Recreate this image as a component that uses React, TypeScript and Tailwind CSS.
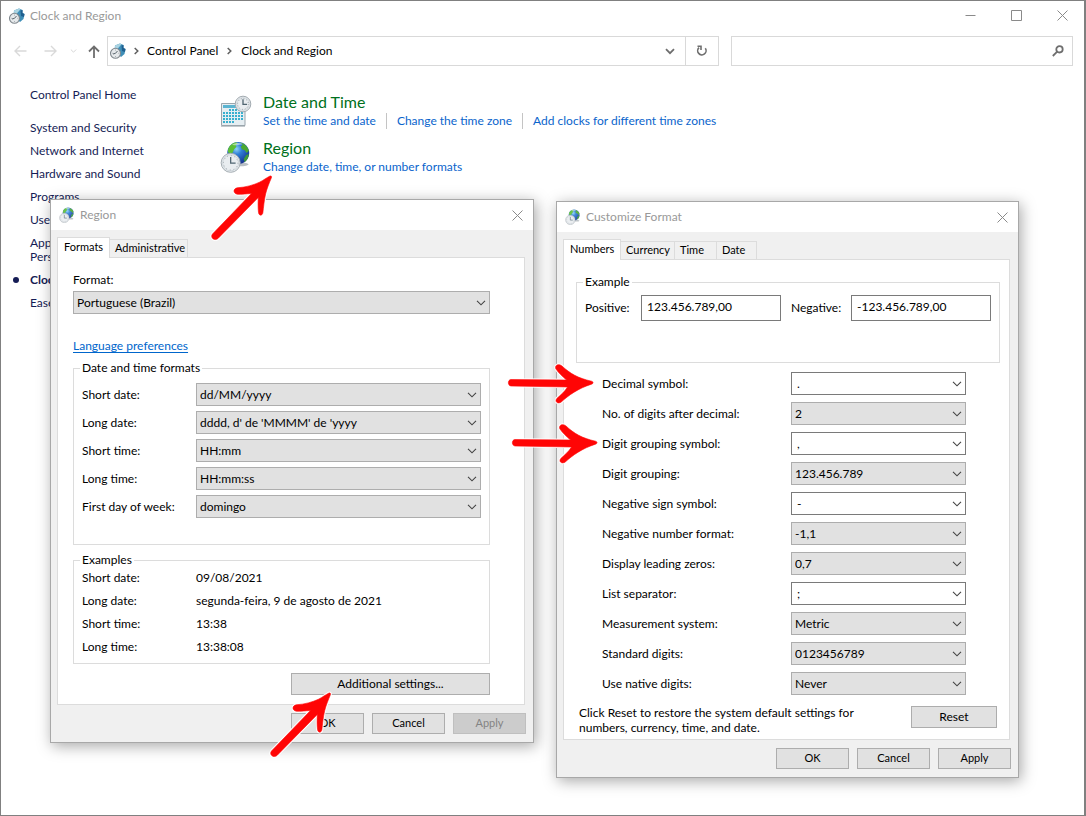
import React, { useId } from 'react';

const ClockFace = ({ cx, cy, r }: { cx: number; cy: number; r: number }) => (
    <g>
        <circle cx={cx} cy={cy} r={r} fill="#e9edf0" stroke="#a3abb1" strokeWidth={1} />
        <circle cx={cx} cy={cy} r={r - 1.5} fill="none" stroke="#c9d0d5" strokeWidth={0.8} />
        <circle cx={cx} cy={cy} r={r - 2.4} fill="none" stroke="#8f989f" strokeWidth={1} strokeDasharray={`0.8 ${((r - 2.4) * Math.PI) / 6 - 0.8}`} />
        <path d={`M${cx} ${cy - r * 0.62}V${cy + 0.4}H${cx + r * 0.52}`} fill="none" stroke="#4f6470" strokeWidth={1.3} />
    </g>
);

const GlobeClockIcon = ({ className }: { className: string }) => {
    const id = useId();
    return (
        <svg className={className} viewBox="0 0 32 33" aria-hidden="true">
            <defs>
                <radialGradient id={id} cx="0.42" cy="0.32" r="0.7">
                    <stop offset="0%" stopColor="#8fd4f7" />
                    <stop offset="35%" stopColor="#2f7fd6" />
                    <stop offset="100%" stopColor="#14318f" />
                </radialGradient>
            </defs>
            <ellipse cx="20" cy="24" rx="9" ry="2" fill="#b9bfc4" />
            <circle cx="18.3" cy="12.3" r="11.3" fill={`url(#${id})`} />
            <path d="M8 8C9.500 4.500 12.500 2 16 1.400L18 2.600 15.500 4.200 16.500 6 14 8.500 12.500 12 9.500 13.500 7.600 11Z" fill="#5cbf35" />
            <path d="M20 1.500C24.500 2.400 28 5.500 29.300 10L27 12.500 25 9.500 22 8.500 21 5.500 23 4Z" fill="#4aa92f" />
            <path d="M26.500 14.500 29.200 13.500C29 17 27.500 20 25 21.800L24 18.500Z" fill="#3d9a3a" />
            <path d="M12 3.800C15 1.800 20 1.500 23 3.200 20 4.200 15 5.200 12 3.800Z" fill="#fff" opacity="0.5" />
            <ClockFace cx={10.5} cy={22.5} r={9.8} />
        </svg>
    );
};

const CalendarClockIcon = ({ className }: { className: string }) => (
    <svg className={className} viewBox="0 0 32 32" aria-hidden="true">
        <path d="M1.500 8.500H25V30.500H1.500Z" fill="#e6eef2" stroke="#9aa5ac" strokeWidth={1} />
        <path d="M3 10H24V13H3Z" fill="#5bb4d1" />
        <path d="M3 15H24M3 18H24M3 21H24M3 24H24" stroke="#38b0cf" strokeWidth={2} strokeDasharray="2 1" />
        <path d="M3 27H15" stroke="#38b0cf" strokeWidth={2} strokeDasharray="2 1" />
        <path d="M3 14H8V17H3Z" fill="#e6eef2" />
        <path d="M1 31.500H25" stroke="#c3c9cd" strokeWidth={1} />
        <ClockFace cx={23} cy={9} r={7.8} />
    </svg>
);

const ControlPanelIcon = ({ className }: { className: string }) => (
    <svg className={className} viewBox="0 0 16 16" aria-hidden="true">
        <path d="M5 2.500 10 0.500 13.500 2V5L15.500 6 14.500 11 11 14 5 8Z" fill="#3f8fb8" />
        <path d="M5 2.500 10 0.500 11.500 1.200 7.500 6 4 6.500Z" fill="#a9d3e2" />
        <path d="M11.500 2.500 13.500 2V5L15.500 6 15 9 12 8Z" fill="#1f5f8f" />
        <circle cx="5.500" cy="10.300" r="5" fill="#e6e9eb" stroke="#7f878d" strokeWidth={1.1} />
        <path d="M3 11 5.500 10.300 7.500 8" fill="none" stroke="#59656d" strokeWidth={1} />
        <path d="M5.500 6.600V7.500M5.500 13.200V14M2 10.300H2.700M8.400 10.300H9.200" stroke="#8b949a" strokeWidth={0.8} />
    </svg>
);

const CloseIcon = () => (
    <svg className="size-[11px]" viewBox="0 0 11 11" fill="none" stroke="#8a8a8a" aria-hidden="true">
        <path d="M0.500 0.500 10.500 10.500M10.500 0.500 0.500 10.500" />
    </svg>
);

const ChevronIcon = ({ className }: { className: string }) => (
    <svg className={className} viewBox="0 0 10 6" fill="none" stroke="currentColor" strokeWidth={1.1} aria-hidden="true">
        <path d="M1 0.800 5 4.800 9 0.800" />
    </svg>
);

const CrumbIcon = () => (
    <svg className="h-[8px] w-[5px] text-[#5f5f5f]" viewBox="0 0 5 8" fill="none" stroke="currentColor" strokeWidth={1.5} aria-hidden="true">
        <path d="M0.700 1 3.800 4 0.700 7" />
    </svg>
);

const diagonalPath =
    'M62 2C63 1.600 63.900 2.400 63.500 3.500C61 9.500 58.900 14.500 57.600 20C56 27 55.600 33 54.900 38.500C54.400 42 51 42 50.500 38.500C50 34 50 29.500 50.300 23.500L10 64.500C6.500 67.500 1.800 63.500 4.500 60L43.500 19.500C38 19.800 34 20.500 29.500 20.300C25 19.700 24.800 14.800 29.200 13.800C38 13.200 45 11.200 51.500 8.200C55.500 6.200 58.500 3.800 62 2Z';

const rightPath =
    'M5 18.500C1.500 18.800 1.500 24.600 5 25L61.500 26C59 30.500 54 34.500 50.800 37.500C48.500 40.500 51.500 43.200 55 41.200C63 34 72 27.500 85.500 23.200C87.500 22.500 87.500 20.800 85.500 20.200C72 17.200 64 12.500 56 5C52.500 2.200 48.500 4 49.800 7.800C52.500 12 56.500 15.500 60.500 19Z';

const DiagonalArrow = ({ className }: { className: string }) => (
    <svg className={`absolute z-20 h-[66px] w-[64px] pointer-events-none overflow-visible ${className}`} viewBox="0 0 64 66" aria-hidden="true">
        <path d={diagonalPath} fill="#fff" stroke="#fff" strokeWidth={2.6} strokeLinejoin="round" />
        <path d={diagonalPath} fill="#ff0505" stroke="#ff0505" strokeWidth={0.6} strokeLinejoin="round" />
    </svg>
);

const RightArrow = ({ className }: { className: string }) => (
    <svg className={`absolute z-20 h-[44px] w-[90px] pointer-events-none overflow-visible ${className}`} viewBox="0 0 90 44" aria-hidden="true">
        <path d={rightPath} fill="#fff" stroke="#fff" strokeWidth={2.6} strokeLinejoin="round" />
        <path d={rightPath} fill="#ff0505" stroke="#ff0505" strokeWidth={0.6} strokeLinejoin="round" />
    </svg>
);

const Drop = ({ id, value, editable = false }: { id: string; value: string; editable?: boolean }) => (
    <div className="relative flex-1">
        <select
            id={id}
            className={`block h-[23px] w-full appearance-none border pr-6 text-xs leading-4 outline-none ${
                editable ? 'border-[#7a7a7a] bg-white pl-[5px]' : 'border-[#adadad] bg-[#e1e1e1] pl-[3px]'
            }`}
        >
            <option>{value}</option>
        </select>
        <ChevronIcon className="absolute top-[9px] right-1 h-[6px] w-[10px] text-[#444] pointer-events-none" />
    </div>
);

const Button = ({ children, className, disabled }: { children: React.ReactNode; className: string; disabled?: boolean }) => (
    <button
        type="button"
        disabled={disabled}
        className={`border text-center ${disabled ? 'border-[#bfbfbf] bg-[#cccccc] text-[#838383]' : 'border-[#adadad] bg-[#e1e1e1]'} ${className}`}
    >
        {children}
    </button>
);

interface DialogProps {
    title: string;
    tabs: { name: string; width: string }[];
    className: string;
    applyDisabled?: boolean;
    children: React.ReactNode;
}

const Dialog = ({ title, tabs, className, applyDisabled, children }: DialogProps) => (
    <section className={`absolute z-10 border border-[#a8a8a8] bg-[#f0f0f0] shadow-[2px_3px_14px_rgba(0,0,0,0.35)] ${className}`}>
        <header className="flex h-[30px] items-center bg-white pr-[10px] pl-2">
            <GlobeClockIcon className="size-4 opacity-90" />
            <h2 className="ml-[5px] flex-1 text-xs leading-4 text-[#999]">{title}</h2>
            <button type="button" aria-label="Close">
                <CloseIcon />
            </button>
        </header>
        <div className="pt-[7px] pr-[7px] pb-2 pl-1.5">
            <div role="tablist" className="flex h-5 items-end text-[11px]">
                {tabs.map((tab, i) => (
                    <button
                        key={tab.name}
                        type="button"
                        role="tab"
                        aria-selected={i === 0}
                        className={`text-left ${tab.width} ${
                            i === 0
                                ? 'relative -mb-px h-[21px] border border-b-0 border-[#dcdcdc] bg-white pb-0.5 pl-1.5'
                                : 'h-[18px] border border-b-0 border-l-0 border-[#dcdcdc] pl-[5px]'
                        }`}
                    >
                        {tab.name}
                    </button>
                ))}
            </div>
            <div className="mr-px border border-[#dcdcdc] bg-white">{children}</div>
            <div className="mt-2 flex justify-end gap-2 text-[11px]">
                <Button className="h-[21px] w-[73px]">OK</Button>
                <Button className="h-[21px] w-[73px]">Cancel</Button>
                <Button className="h-[21px] w-[73px]" disabled={applyDisabled}>Apply</Button>
            </div>
        </div>
    </section>
);

const Group = ({ legend, className, children }: { legend: string; className: string; children: React.ReactNode }) => (
    <fieldset className={`min-w-0 border border-[#dcdcdc] px-2 ${className}`}>
        <legend className="-ml-0.5 px-0.5 leading-4">{legend}</legend>
        {children}
    </fieldset>
);

const regionTabs = [
    { name: 'Formats', width: 'w-[53px]' },
    { name: 'Administrative', width: 'w-[78px]' },
];

const customizeTabs = [
    { name: 'Numbers', width: 'w-[58px]' },
    { name: 'Currency', width: 'w-[54px]' },
    { name: 'Time', width: 'w-[42px]' },
    { name: 'Date', width: 'w-[40px]' },
];

const dateFormats = [
    { label: 'Short date:', value: 'dd/MM/yyyy' },
    { label: 'Long date:', value: "dddd, d' de 'MMMM' de 'yyyy" },
    { label: 'Short time:', value: 'HH:mm' },
    { label: 'Long time:', value: 'HH:mm:ss' },
    { label: 'First day of week:', value: 'domingo' },
];

const examples = [
    { label: 'Short date:', value: '09/08/2021' },
    { label: 'Long date:', value: 'segunda-feira, 9 de agosto de 2021' },
    { label: 'Short time:', value: '13:38' },
    { label: 'Long time:', value: '13:38:08' },
];

const numberFormats = [
    { label: 'Decimal symbol:', value: '.', editable: true },
    { label: 'No. of digits after decimal:', value: '2' },
    { label: 'Digit grouping symbol:', value: ',', editable: true },
    { label: 'Digit grouping:', value: '123.456.789' },
    { label: 'Negative sign symbol:', value: '-', editable: true },
    { label: 'Negative number format:', value: '-1,1' },
    { label: 'Display leading zeros:', value: '0,7' },
    { label: 'List separator:', value: ';', editable: true },
    { label: 'Measurement system:', value: 'Metric' },
    { label: 'Standard digits:', value: '0123456789' },
    { label: 'Use native digits:', value: 'Never' },
];

const RegionDialog = () => (
    <Dialog title="Region" tabs={regionTabs} className="top-[198px] left-[49px] w-[484px]" applyDisabled>
        <div className="pt-[14px] pr-[34px] pb-[9px] pl-[15px]">
            <label htmlFor="format" className="block leading-4">Format:</label>
            <div className="mt-[3px] flex">
                <Drop id="format" value="Portuguese (Brazil)" />
            </div>
            <a href="#language" className="mt-6 block w-fit leading-4 text-[#0066cc] underline underline-offset-2">Language preferences</a>

            <Group legend="Date and time formats" className="mt-1.5 pb-[26px]">
                <div className="mt-[7px] flex flex-col gap-[5px]">
                    {dateFormats.map((f, i) => (
                        <div key={f.label} className="flex items-center">
                            <label htmlFor={`date-${i}`} className="w-[114px]">{f.label}</label>
                            <Drop id={`date-${i}`} value={f.value} />
                        </div>
                    ))}
                </div>
            </Group>

            <Group legend="Examples" className="mt-[7px] pb-2">
                <dl className="flex flex-col gap-[7px] pt-0.5 leading-4">
                    {examples.map((e) => (
                        <div key={e.label} className="flex">
                            <dt className="w-[114px]">{e.label}</dt>
                            <dd>{e.value}</dd>
                        </div>
                    ))}
                </dl>
            </Group>

            <div className="mt-[9px] flex justify-end">
                <Button className="h-[22px] w-[199px]">Additional settings...</Button>
            </div>
        </div>
    </Dialog>
);

const CustomizeDialog = () => (
    <Dialog title="Customize Format" tabs={customizeTabs} className="top-[200px] left-[555px] w-[463px]">
        <div className="pt-[14px] pr-[9px] pb-1 pl-3">
            <Group legend="Example" className="pb-[41px]">
                <div className="flex items-center pt-[5px]">
                    <label htmlFor="positive" className="w-14">Positive:</label>
                    <input id="positive" readOnly value="123.456.789,00" className="h-[26px] min-w-0 flex-1 border border-[#7a7a7a] px-[5px] pb-1" />
                    <label htmlFor="negative" className="ml-[10px] w-[60px]">Negative:</label>
                    <input id="negative" readOnly value="-123.456.789,00" className="h-[26px] min-w-0 flex-1 border border-[#7a7a7a] px-[5px] pb-1" />
                </div>
            </Group>

            <div className="mt-[9px] flex flex-col gap-[7px] pr-[34px] pl-[26px]">
                {numberFormats.map((f, i) => (
                    <div key={f.label} className="flex items-center">
                        <label htmlFor={`num-${i}`} className="w-[189px]">{f.label}</label>
                        <Drop id={`num-${i}`} value={f.value} editable={f.editable} />
                    </div>
                ))}
            </div>

            <div className="mt-[10px] flex items-start justify-between pr-[3px] pl-[3px]">
                <p className="w-[290px] leading-[15px]">Click Reset to restore the system default settings for numbers, currency, time, and date.</p>
                <Button className="mt-px h-[22px] w-[86px]">Reset</Button>
            </div>
        </div>
    </Dialog>
);

const sidebarLinks = [
    'System and Security',
    'Network and Internet',
    'Hardware and Sound',
    'Programs',
    'User Accounts',
    'Appearance and Personalization',
    'Clock and Region',
    'Ease of Access',
];

const categories = [
    { title: 'Date and Time', Icon: CalendarClockIcon, links: ['Set the time and date', 'Change the time zone', 'Add clocks for different time zones'] },
    { title: 'Region', Icon: GlobeClockIcon, links: ['Change date, time, or number formats'] },
];

export default function App() {
    return (
        <div className="relative flex min-h-screen flex-col border border-r-2 border-[#808080] bg-white font-['Lato','Open_Sans',sans-serif] text-xs text-black">
            <header className="flex h-[29px] items-center pr-4 pl-2">
                <ControlPanelIcon className="size-4" />
                <h1 className="ml-[5px] flex-1 text-[#999]">Clock and Region</h1>
                <div className="flex items-center gap-[35px]">
                    <button type="button" aria-label="Minimize">
                        <svg className="size-[11px]" viewBox="0 0 11 11" stroke="#8a8a8a" aria-hidden="true"><path d="M0.500 5.500H10.500" /></svg>
                    </button>
                    <button type="button" aria-label="Maximize">
                        <svg className="size-[11px]" viewBox="0 0 11 11" fill="none" stroke="#8a8a8a" aria-hidden="true"><path d="M0.500 0.500H10.500V10.500H0.500Z" /></svg>
                    </button>
                    <button type="button" aria-label="Close"><CloseIcon /></button>
                </div>
            </header>

            <nav className="mt-1.5 flex h-[30px] items-center pr-[11px] pl-[13px]">
                <button type="button" aria-label="Back">
                    <svg className="h-3 w-[13px]" viewBox="0 0 13 12" fill="none" stroke="#d9d9d9" strokeWidth={1.4} aria-hidden="true"><path d="M6 1 1 6 6 11M1 6H12.500" /></svg>
                </button>
                <button type="button" aria-label="Forward" className="ml-[17px]">
                    <svg className="h-3 w-[13px]" viewBox="0 0 13 12" fill="none" stroke="#d9d9d9" strokeWidth={1.4} aria-hidden="true"><path d="M7 1 12 6 7 11M12 6H0.500" /></svg>
                </button>
                <button type="button" aria-label="Recent locations" className="ml-[13px]">
                    <ChevronIcon className="h-1 w-[7px] text-[#c8c8c8]" />
                </button>
                <button type="button" aria-label="Up" className="ml-[11px]">
                    <svg className="h-[13px] w-3" viewBox="0 0 12 13" fill="none" stroke="#6e6e6e" strokeWidth={1.8} aria-hidden="true"><path d="M1 6.500 6 1.500 11 6.500M6 2V13" /></svg>
                </button>
                <div className="ml-[7px] flex h-[30px] flex-1 border border-[#d9d9d9]">
                    <div className="flex flex-1 items-center pr-[10px] pl-0.5">
                        <ControlPanelIcon className="size-4" />
                        <span className="ml-2"><CrumbIcon /></span>
                        <a href="#control-panel" className="ml-2">Control Panel</a>
                        <span className="ml-[9px]"><CrumbIcon /></span>
                        <a href="#clock-region" className="ml-[9px] flex-1">Clock and Region</a>
                        <button type="button" aria-label="Previous locations">
                            <svg className="h-[7px] w-[10px]" viewBox="0 0 10 7" fill="none" stroke="#6e6e6e" strokeWidth={1.8} aria-hidden="true"><path d="M1 1.200 5 5.200 9 1.200" /></svg>
                        </button>
                    </div>
                    <button type="button" aria-label="Refresh" className="flex w-[33px] items-center justify-center border-l border-[#d9d9d9]">
                        <svg className="size-3" viewBox="0 0 12 12" fill="none" stroke="#6e6e6e" strokeWidth={1.6} aria-hidden="true">
                            <path d="M3 2.600A4.200 4.200 0 1 0 9.300 3.200M1.500 1.200H5V5" />
                        </svg>
                    </button>
                </div>
                <label className="ml-3 flex h-[30px] w-[342px] items-center border border-[#d9d9d9] pr-2">
                    <input type="search" aria-label="Search Control Panel" className="h-full min-w-0 flex-1 px-2 outline-none" />
                    <svg className="size-3" viewBox="0 0 12 12" fill="none" stroke="#6e6e6e" strokeWidth={1.8} aria-hidden="true">
                        <circle cx="7.500" cy="4.300" r="3.200" />
                        <path d="M5.200 6.600 0.800 11" />
                    </svg>
                </label>
            </nav>

            <div className="flex flex-1">
                <aside className="w-[219px] shrink-0 pt-[21px] pr-[60px] pl-[29px] leading-[14px] text-[#151c55]">
                    <a href="#home" className="block leading-4">Control Panel Home</a>
                    <ul className="mt-[18px] flex flex-col gap-[9px]">
                        {sidebarLinks.map((link) => (
                            <li key={link} className="relative">
                                {link === 'Clock and Region' && <span className="absolute top-1 -left-[17px] size-1.5 rounded-full bg-[#151c55]" />}
                                <a href="#category" className={link === 'Clock and Region' ? 'font-bold' : ''}>{link}</a>
                            </li>
                        ))}
                    </ul>
                </aside>
                <main className="flex flex-1 flex-col gap-[10px] pt-[27px]">
                    {categories.map(({ title, Icon, links }) => (
                        <div key={title} className="flex">
                            <Icon className="mt-0.5 size-8" />
                            <div className="ml-[11px]">
                                <h2 className="text-base leading-[18px] text-[#007020]">{title}</h2>
                                <ul className="mt-0.5 flex leading-4 text-[#0a64cc]">
                                    {links.map((link, i) => (
                                        <li key={link} className={i > 0 ? 'ml-[10px] border-l border-[#c4c4c4] pl-[10px]' : ''}>
                                            <a href="#task">{link}</a>
                                        </li>
                                    ))}
                                </ul>
                            </div>
                        </div>
                    ))}
                </main>
            </div>

            <RegionDialog />
            <CustomizeDialog />

            <DiagonalArrow className="top-[173px] left-[207px]" />
            <DiagonalArrow className="top-[690px] left-[266px]" />
            <RightArrow className="top-[360px] left-[505px]" />
            <RightArrow className="top-[420px] left-[509px]" />
        </div>
    );
}
